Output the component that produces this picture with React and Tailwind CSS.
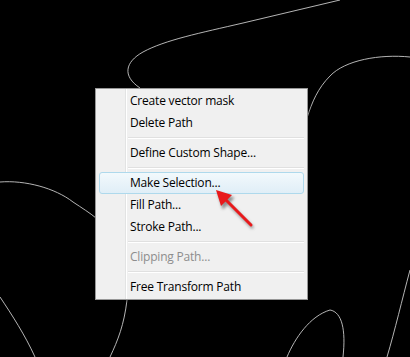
import React from 'react';

const items = [
  { label: 'Create vector mask' },
  { label: 'Delete Path' },
  { sep: true },
  { label: 'Define Custom Shape...' },
  { sep: true },
  { label: 'Make Selection...', active: true },
  { label: 'Fill Path...' },
  { label: 'Stroke Path...' },
  { sep: true },
  { label: 'Clipping Path...', disabled: true },
  { sep: true },
  { label: 'Free Transform Path' },
];

function Backdrop() {
  return (
    <svg className="absolute inset-0" width="410" height="357" viewBox="0 0 410 357" fill="none">
      <g stroke="#c8c8c8" strokeWidth="0.9">
        <path d="M340,0 L243,23 C200,33 165,40 143,52 C125,62 122,76 140,88" />
        <path d="M410,57 C380,54 345,60 330,76 C318,88 312,102 307,118" />
        <path d="M0,182 C25,180 55,188 73,202 C82,208 90,213 96,218" />
        <path d="M0,297 C12,315 25,335 35,357" />
        <path d="M127,300 C124,325 118,340 110,357" />
        <path d="M287,357 C295,338 310,316 330,310 C342,312 346,330 343,357" />
        <path d="M410,270 C402,300 395,330 387,357" />
      </g>
    </svg>
  );
}

function Arrow() {
  return (
    <svg className="absolute inset-0 pointer-events-none" width="410" height="357" viewBox="0 0 410 357">
      <defs>
        <filter id="sh" x="-50%" y="-50%" width="200%" height="200%">
          <feGaussianBlur stdDeviation="1.5" />
        </filter>
      </defs>
      <g transform="translate(2,3)" filter="url(#sh)" fill="#7a7a7a" stroke="#7a7a7a" opacity="0.8">
        <line x1="251" y1="225" x2="224" y2="198" strokeWidth="3" />
        <polygon points="216,190 232,195 221,206" />
      </g>
      <line x1="251" y1="225" x2="224" y2="198" stroke="#e8191b" strokeWidth="3" strokeLinecap="round" />
      <polygon points="216,190 232,195 221,206" fill="#e8191b" />
    </svg>
  );
}

export default function App() {
  return (
    <div className="relative w-[410px] h-[357px] bg-black overflow-hidden" style={{ fontFamily: '"Open Sans", "Noto Sans", sans-serif' }}>
      <Backdrop />
      <div className="relative pt-[88px] pl-[95px]">
        <div className="relative w-[213px] border border-[#979797] bg-[#f0f0f0] p-px shadow-[2px_2px_3px_rgba(0,0,0,0.3)]">
          <div className="absolute top-0 bottom-0 left-[29px] w-px bg-[#e2e3e3]" />
          <div className="absolute top-0 bottom-0 left-[30px] w-px bg-white" />
          {items.map((it, i) =>
            it.sep ? (
              <div key={i} className="h-2 flex flex-col justify-center pl-[31px] pr-[2px]">
                <div className="h-px bg-[#e0e0e0]" />
                <div className="h-px bg-white" />
              </div>
            ) : (
              <div
                key={i}
                className={
                  'relative h-[22px] flex items-center text-[12px] tracking-[-0.2px] ' +
                  (it.active
                    ? 'mx-[2px] pl-[30px] rounded-[3px] border border-[#aed9ec] bg-gradient-to-b from-[#f2f9fc] to-[#e0eef7] '
                    : 'pl-[33px] ') +
                  (it.disabled ? 'text-[#8d8d8d]' : 'text-black')
                }
              >
                {it.label}
              </div>
            )
          )}
        </div>
      </div>
      <Arrow />
    </div>
  );
}
